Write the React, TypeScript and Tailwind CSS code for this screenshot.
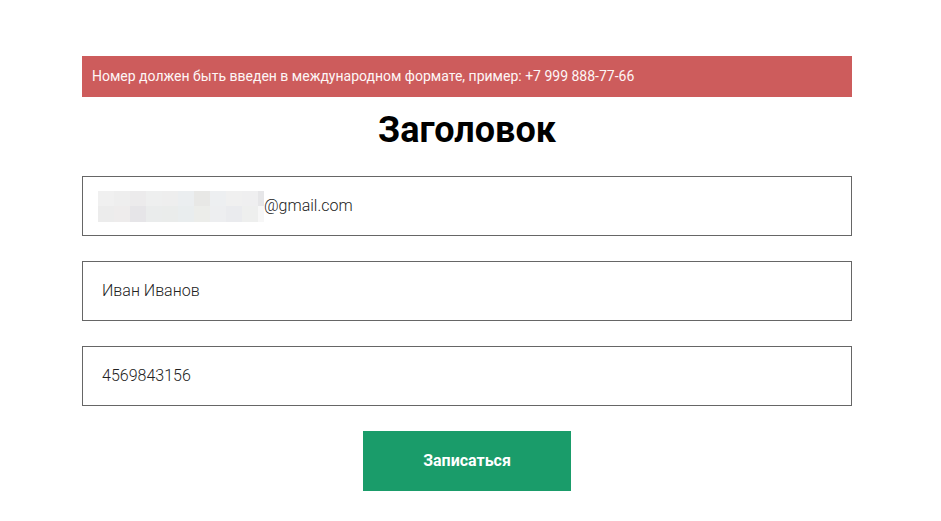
const blurRows = [
  ["#f0f0f0", "#eeeeee", "#ecebec", "#eeefef", "#eeeeee", "#ebeef0", "#e8e8e6", "#edeff1", "#f0f0f0", "#efeff0", "#e6e6e8"],
  ["#ececec", "#eeecec", "#e6e5e8", "#eaecec", "#eaeceb", "#e9edee", "#ecedea", "#edeef0", "#eaebee", "#eeefee", "#f7f7f7"],
];

function Blurred() {
  return (
    <div className="flex flex-col">
      {blurRows.map((row, i) => (
        <div key={i} className="flex">
          {row.map((c, j) => (
            <div key={j} className={j === 10 ? "w-[6px] h-[15.5px]" : "w-[16px] h-[15.5px]"} style={{ backgroundColor: c }} />
          ))}
        </div>
      ))}
    </div>
  );
}

export default function App() {
  return (
    <div className="min-h-screen bg-white font-['Roboto',sans-serif]">
      <div className="w-[770px] ml-[82px] pt-[56px]">
        {/* Error alert */}
        <div className="h-[41px] bg-[#cd5c5c] flex items-center px-[10px] text-[14px] text-[#fdf6f6]">
          Номер должен быть введен в международном формате, пример: +7 999 888-77-66
        </div>

        <h1 className="mt-[3px] h-[59px] flex items-center justify-center text-[36px] font-bold text-black">
          Заголовок
        </h1>

        <div className="mt-[17px] flex flex-col gap-[25px]">
          <div className="h-[60px] border border-[#666666] flex items-center pl-[15px] text-[16px] font-light text-[#222222]">
            <Blurred />
            <span>@gmail.com</span>
          </div>
          <div className="h-[60px] border border-[#666666] flex items-center pl-[19px] text-[16px] font-light text-[#222222]">
            Иван Иванов
          </div>
          <div className="h-[60px] border border-[#666666] flex items-center pl-[19px] text-[16px] font-light text-[#222222]">
            4569843156
          </div>
        </div>

        <div className="mt-[25px] flex justify-center">
          <button className="w-[208px] h-[60px] bg-[#1a9c6a] text-white text-[16px] font-bold">
            Записаться
          </button>
        </div>
      </div>
    </div>
  );
}
